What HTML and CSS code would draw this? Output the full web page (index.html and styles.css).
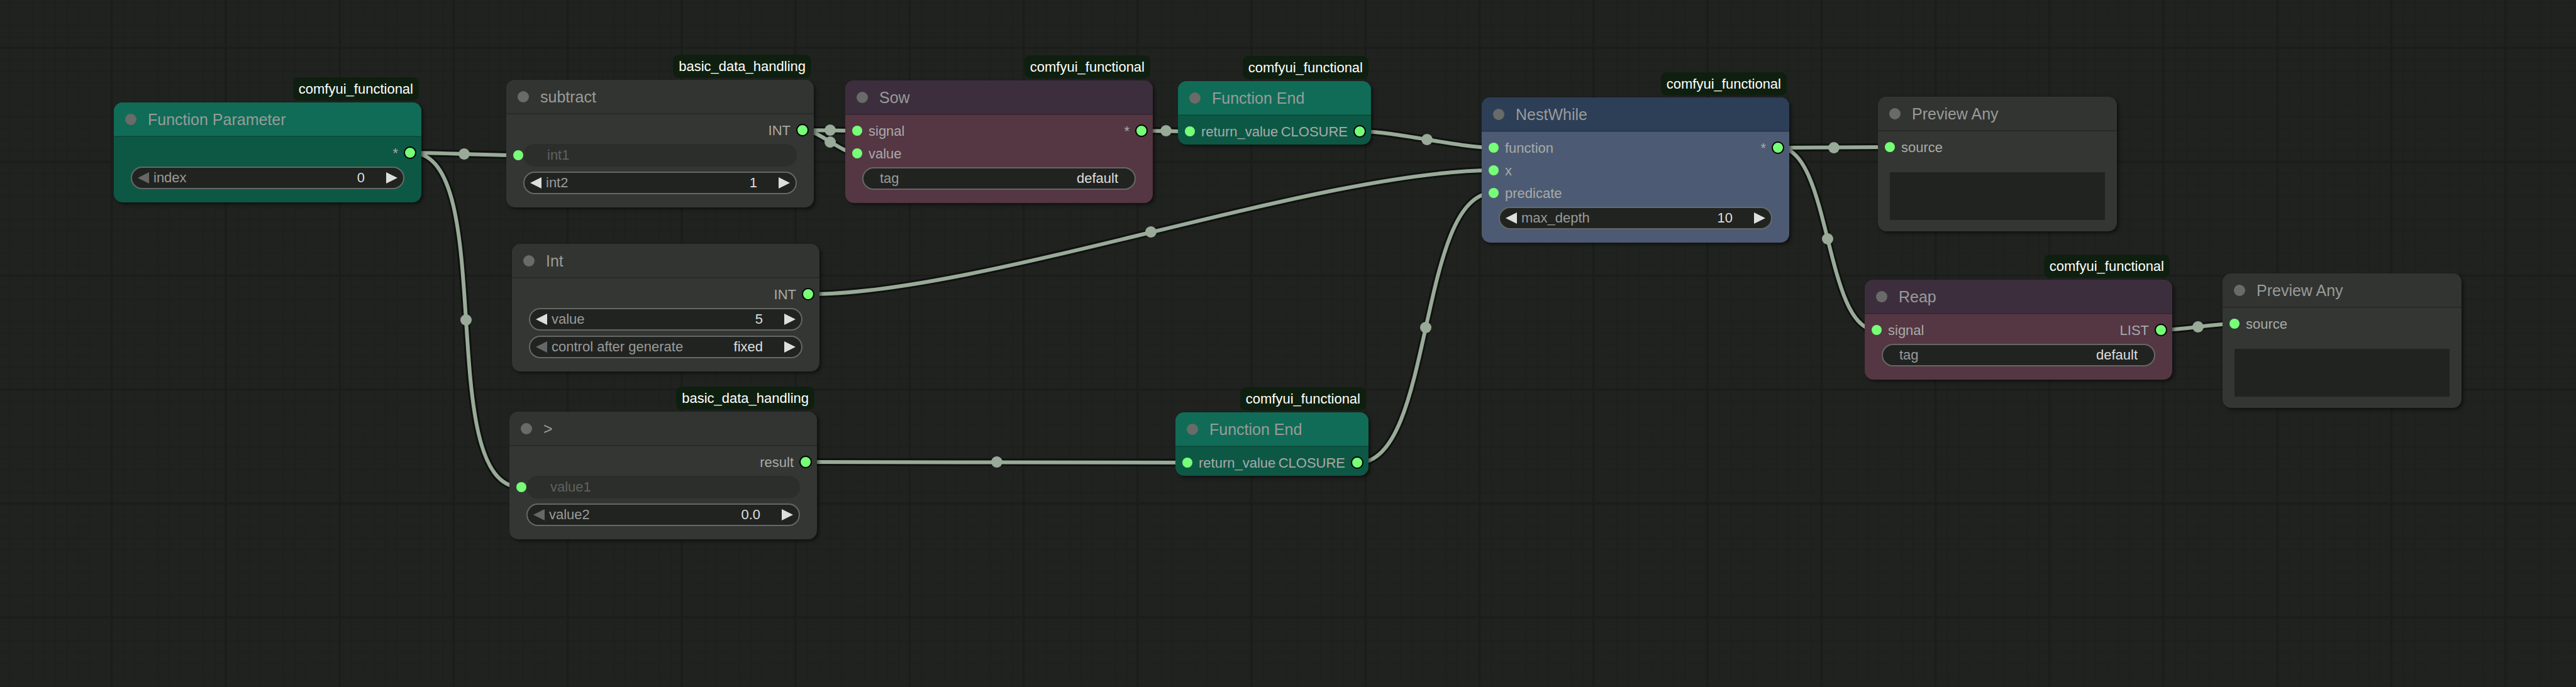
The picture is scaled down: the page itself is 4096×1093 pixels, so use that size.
FILE: index.html
```html
<!DOCTYPE html>
<html lang="en">
<head>
<meta charset="utf-8">
<title>Functional workflow</title>
<link rel="stylesheet" href="styles.css">
</head>
<body>
<svg class="symbols" aria-hidden="true">
  <symbol id="prev" viewBox="0 0 18 18"><path d="M18 0V18L0 9Z"/></symbol>
  <symbol id="next" viewBox="0 0 18 18"><path d="M0 0V18L18 9Z"/></symbol>
</svg>
<main class="canvas">
  <svg class="wires" aria-hidden="true">
    <defs>
      <pattern id="minor" width="20" height="20" x="16" y="4" patternUnits="userSpaceOnUse" patternTransform="scale(.9062)">
        <path class="grid-minor" d="M0 0H20M0 0V20"/>
      </pattern>
      <pattern id="major" width="200" height="200" x="-100" y="-16" patternUnits="userSpaceOnUse" patternTransform="scale(.9062)">
        <path class="grid-major" d="M0 100H200M96 0V200"/>
      </pattern>
      <g id="links">
        <path d="M654 243C696 243 781 247 823 247"/>
        <path d="M654 243C794 243 688 775 828 775"/>
        <path d="M1278 207C1299 207 1341 208 1362 208"/>
        <path d="M1278 207C1301 207 1339 244 1362 244"/>
        <path d="M1817 208C1835 208 1873 209 1891 209"/>
        <path d="M2164 209C2217 209 2321 235 2374 235"/>
        <path d="M1287 468C1563 468 2098 271 2374 271"/>
        <path d="M1283 735C1434 735 1736 736 1887 736"/>
        <path d="M2160 736C2280 736 2254 307 2374 307"/>
        <path d="M2829 235C2873 235 2960 234 3004 234"/>
        <path d="M2829 235C2911 235 2901 525 2983 525"/>
        <path d="M3438 525C3467 525 3523 515 3552 515"/>
      </g>
    </defs>
    <rect width="100%" height="100%" fill="url(#minor)"/>
    <rect width="100%" height="100%" fill="url(#major)"/>
    <use href="#links" class="wire-edge"/>
    <use href="#links" class="wire"/>
    <g class="joints">
      <circle cx="738" cy="245" r="9"/>
      <circle cx="741" cy="509" r="9"/>
      <circle cx="1320" cy="207" r="9"/>
      <circle cx="1320" cy="226" r="9"/>
      <circle cx="1854" cy="208" r="9"/>
      <circle cx="2269" cy="222" r="9"/>
      <circle cx="1830" cy="369" r="9"/>
      <circle cx="1585" cy="735" r="9"/>
      <circle cx="2267" cy="521" r="9"/>
      <circle cx="2916" cy="235" r="9"/>
      <circle cx="2906" cy="380" r="9"/>
      <circle cx="3495" cy="520" r="9"/>
    </g>
  </svg>

  <section class="node green n-param">
    <span class="badge">comfyui_functional</span>
    <h2 class="title"><i class="dot"></i>Function Parameter</h2>
    <div class="body">
      <div class="slots"><span class="out">*</span></div>
      <div class="widget">
        <button class="step off" aria-label="Decrease index"><svg><use href="#prev"/></svg></button>
        <label for="index">index</label><input id="index" type="text" value="0">
        <button class="step" aria-label="Increase index"><svg><use href="#next"/></svg></button>
      </div>
    </div>
  </section>

  <section class="node n-subtract">
    <span class="badge">basic_data_handling</span>
    <h2 class="title"><i class="dot"></i>subtract</h2>
    <div class="body">
      <div class="slots"><span class="out">INT</span></div>
      <div class="linked"><span class="in">int1</span></div>
      <div class="widget">
        <button class="step" aria-label="Decrease int2"><svg><use href="#prev"/></svg></button>
        <label for="int2">int2</label><input id="int2" type="text" value="1">
        <button class="step" aria-label="Increase int2"><svg><use href="#next"/></svg></button>
      </div>
    </div>
  </section>

  <section class="node plum n-sow">
    <span class="badge">comfyui_functional</span>
    <h2 class="title"><i class="dot"></i>Sow</h2>
    <div class="body">
      <div class="slots"><span class="in">signal</span><span class="out">*</span></div>
      <div class="slots"><span class="in">value</span></div>
      <div class="widget plain">
        <label for="sow-tag">tag</label><input id="sow-tag" type="text" value="default">
      </div>
    </div>
  </section>

  <section class="node green small n-end1">
    <span class="badge">comfyui_functional</span>
    <h2 class="title"><i class="dot"></i>Function End</h2>
    <div class="body">
      <div class="slots"><span class="in">return_value</span><span class="out">CLOSURE</span></div>
    </div>
  </section>

  <section class="node blue n-nest">
    <span class="badge">comfyui_functional</span>
    <h2 class="title"><i class="dot"></i>NestWhile</h2>
    <div class="body">
      <div class="slots"><span class="in">function</span><span class="out">*</span></div>
      <div class="slots"><span class="in">x</span></div>
      <div class="slots"><span class="in">predicate</span></div>
      <div class="widget">
        <button class="step" aria-label="Decrease max_depth"><svg><use href="#prev"/></svg></button>
        <label for="depth">max_depth</label><input id="depth" type="text" value="10">
        <button class="step" aria-label="Increase max_depth"><svg><use href="#next"/></svg></button>
      </div>
    </div>
  </section>

  <section class="node preview n-preview1">
    <h2 class="title"><i class="dot"></i>Preview Any</h2>
    <div class="body">
      <div class="slots"><span class="in">source</span></div>
      <textarea class="output" aria-label="Preview" readonly></textarea>
    </div>
  </section>

  <section class="node n-int">
    <h2 class="title"><i class="dot"></i>Int</h2>
    <div class="body">
      <div class="slots"><span class="out">INT</span></div>
      <div class="widget">
        <button class="step" aria-label="Decrease value"><svg><use href="#prev"/></svg></button>
        <label for="value">value</label><input id="value" type="text" value="5">
        <button class="step" aria-label="Increase value"><svg><use href="#next"/></svg></button>
      </div>
      <div class="widget">
        <button class="step off" aria-label="Previous mode"><svg><use href="#prev"/></svg></button>
        <label for="control">control after generate</label>
        <select id="control"><option>fixed</option></select>
        <button class="step" aria-label="Next mode"><svg><use href="#next"/></svg></button>
      </div>
    </div>
  </section>

  <section class="node n-greater">
    <span class="badge">basic_data_handling</span>
    <h2 class="title"><i class="dot"></i>&gt;</h2>
    <div class="body">
      <div class="slots"><span class="out">result</span></div>
      <div class="linked"><span class="in">value1</span></div>
      <div class="widget">
        <button class="step off" aria-label="Decrease value2"><svg><use href="#prev"/></svg></button>
        <label for="value2">value2</label><input id="value2" type="text" value="0.0">
        <button class="step" aria-label="Increase value2"><svg><use href="#next"/></svg></button>
      </div>
    </div>
  </section>

  <section class="node green small n-end2">
    <span class="badge">comfyui_functional</span>
    <h2 class="title"><i class="dot"></i>Function End</h2>
    <div class="body">
      <div class="slots"><span class="in">return_value</span><span class="out">CLOSURE</span></div>
    </div>
  </section>

  <section class="node plum n-reap">
    <span class="badge">comfyui_functional</span>
    <h2 class="title"><i class="dot"></i>Reap</h2>
    <div class="body">
      <div class="slots"><span class="in">signal</span><span class="out">LIST</span></div>
      <div class="widget plain">
        <label for="reap-tag">tag</label><input id="reap-tag" type="text" value="default">
      </div>
    </div>
  </section>

  <section class="node preview n-preview2">
    <h2 class="title"><i class="dot"></i>Preview Any</h2>
    <div class="body">
      <div class="slots"><span class="in">source</span></div>
      <textarea class="output" aria-label="Preview" readonly></textarea>
    </div>
  </section>
</main>
</body>
</html>
```
FILE: styles.css
```css
* {
  box-sizing: border-box;
}

body {
  margin: 0;
  background: #202220;
  font: 22px/36px "Liberation Sans", Arial, sans-serif;
  color: #a8aaa8;
}

.symbols {
  display: none;
}

.canvas {
  position: relative;
  width: 100%;
  height: 100vh;
  overflow: hidden;
}

/* grid and links */
.wires {
  display: block;
  width: 100%;
  height: 100%;
}

.grid-minor {
  fill: none;
  stroke: #1e201e;
  stroke-width: 4;
}

.grid-major {
  fill: none;
  stroke: #1b1d1b;
  stroke-width: 4;
}

.wire-edge {
  fill: none;
  stroke: #0f120f;
  stroke-width: 12;
}

.wire {
  fill: none;
  stroke: #99aa99;
  stroke-width: 6;
}

.joints {
  fill: #99aa99;
}

/* nodes */
.node {
  --head: #323431;
  --fill: #343633;
  position: absolute;
  width: 489px;
  border-radius: 14px;
  background: var(--fill);
  box-shadow: 3px 3px 5px rgba(0, 0, 0, .5);
}

.green { --head: #106c57; --fill: #0d5845; }
.plum { --head: #3d2e3e; --fill: #553643; }
.blue { --head: #2d3e57; --fill: #4c5b73; }
.small { width: 307px; }
.preview { width: 380px; }

.n-param { left: 181px; top: 163px; }
.n-subtract { left: 805px; top: 127px; }
.n-sow { left: 1344px; top: 128px; }
.n-end1 { left: 1873px; top: 129px; }
.n-nest { left: 2356px; top: 155px; }
.n-preview1 { left: 2986px; top: 154px; }
.n-int { left: 814px; top: 388px; }
.n-greater { left: 810px; top: 655px; }
.n-end2 { left: 1869px; top: 656px; }
.n-reap { left: 2965px; top: 445px; }
.n-preview2 { left: 3534px; top: 435px; }

.badge {
  position: absolute;
  right: 4px;
  bottom: calc(100% + 3px);
  padding: 1px 9px 0;
  border-radius: 9px;
  background: #0f1f0f;
  color: #fff;
  white-space: nowrap;
}

.title {
  display: flex;
  align-items: center;
  gap: 18px;
  height: 54px;
  margin: 0;
  padding-left: 18px;
  border-radius: 14px 14px 0 0;
  background: var(--head);
  box-shadow: inset 0 -1px rgba(0, 0, 0, .2);
  color: #999b99;
  font-size: 25px;
  font-weight: 400;
}

.dot {
  width: 18px;
  height: 18px;
  border-radius: 50%;
  background: #696b69;
}

.body {
  display: flex;
  flex-direction: column;
  padding: 9px 0 21px;
  border-radius: 0 0 14px 14px;
  box-shadow: inset 0 1px rgba(0, 0, 0, .2);
}

.small .body {
  padding-bottom: 2px;
}

/* slots */
.slots {
  display: flex;
  height: 36px;
  padding: 0 8px 0 10px;
}

.in,
.out {
  display: flex;
  align-items: center;
  gap: 9px;
}

.out {
  margin-left: auto;
}

.in::before,
.out::after {
  content: "";
  width: 16px;
  height: 16px;
  border-radius: 50%;
  background: #77ff77;
}

.slots .in::before,
.slots .out::after {
  margin-bottom: 2px;
}

.in::before {
  border: 1px solid transparent;
  background-clip: padding-box;
}

.out::after {
  border: 2px solid #000;
}

/* widgets */
.widget,
.linked {
  display: flex;
  align-items: center;
  height: 36px;
  margin: 3px 27px 0;
  border-radius: 18px;
}

.widget + .widget,
.linked + .widget {
  margin-top: 8px;
}

.widget {
  gap: 7px;
  padding: 0 9px;
  border: 2px solid #666866;
  background: #212321;
  color: #999b99;
}

.plain {
  padding: 0 26px;
}

.linked {
  background: #2c2e2c;
  color: #5f615f;
}

.linked .in {
  gap: 37px;
  margin-left: -17px;
}

.step {
  display: flex;
  flex: none;
  padding: 0;
  border: 0;
  background: none;
  fill: #dddfdd;
}

.step svg {
  width: 18px;
  height: 18px;
}

.off {
  fill: #666866;
}

.widget input,
.widget select {
  flex: 1;
  min-width: 0;
  height: 32px;
  padding: 0;
  border: 0;
  outline: 0;
  background: none;
  color: #dddfdd;
  font: inherit;
  line-height: 32px;
  text-align: right;
  text-align-last: right;
  appearance: none;
}

.widget:not(.plain) input,
.widget select {
  padding-right: 27px;
}

.output {
  display: block;
  height: 76px;
  margin: 21px 19px 0;
  padding: 4px;
  border: 0;
  outline: 0;
  resize: none;
  background: #212321;
  color: #dddfdd;
  font: inherit;
}

.preview .body {
  padding-bottom: 18px;
}
```
